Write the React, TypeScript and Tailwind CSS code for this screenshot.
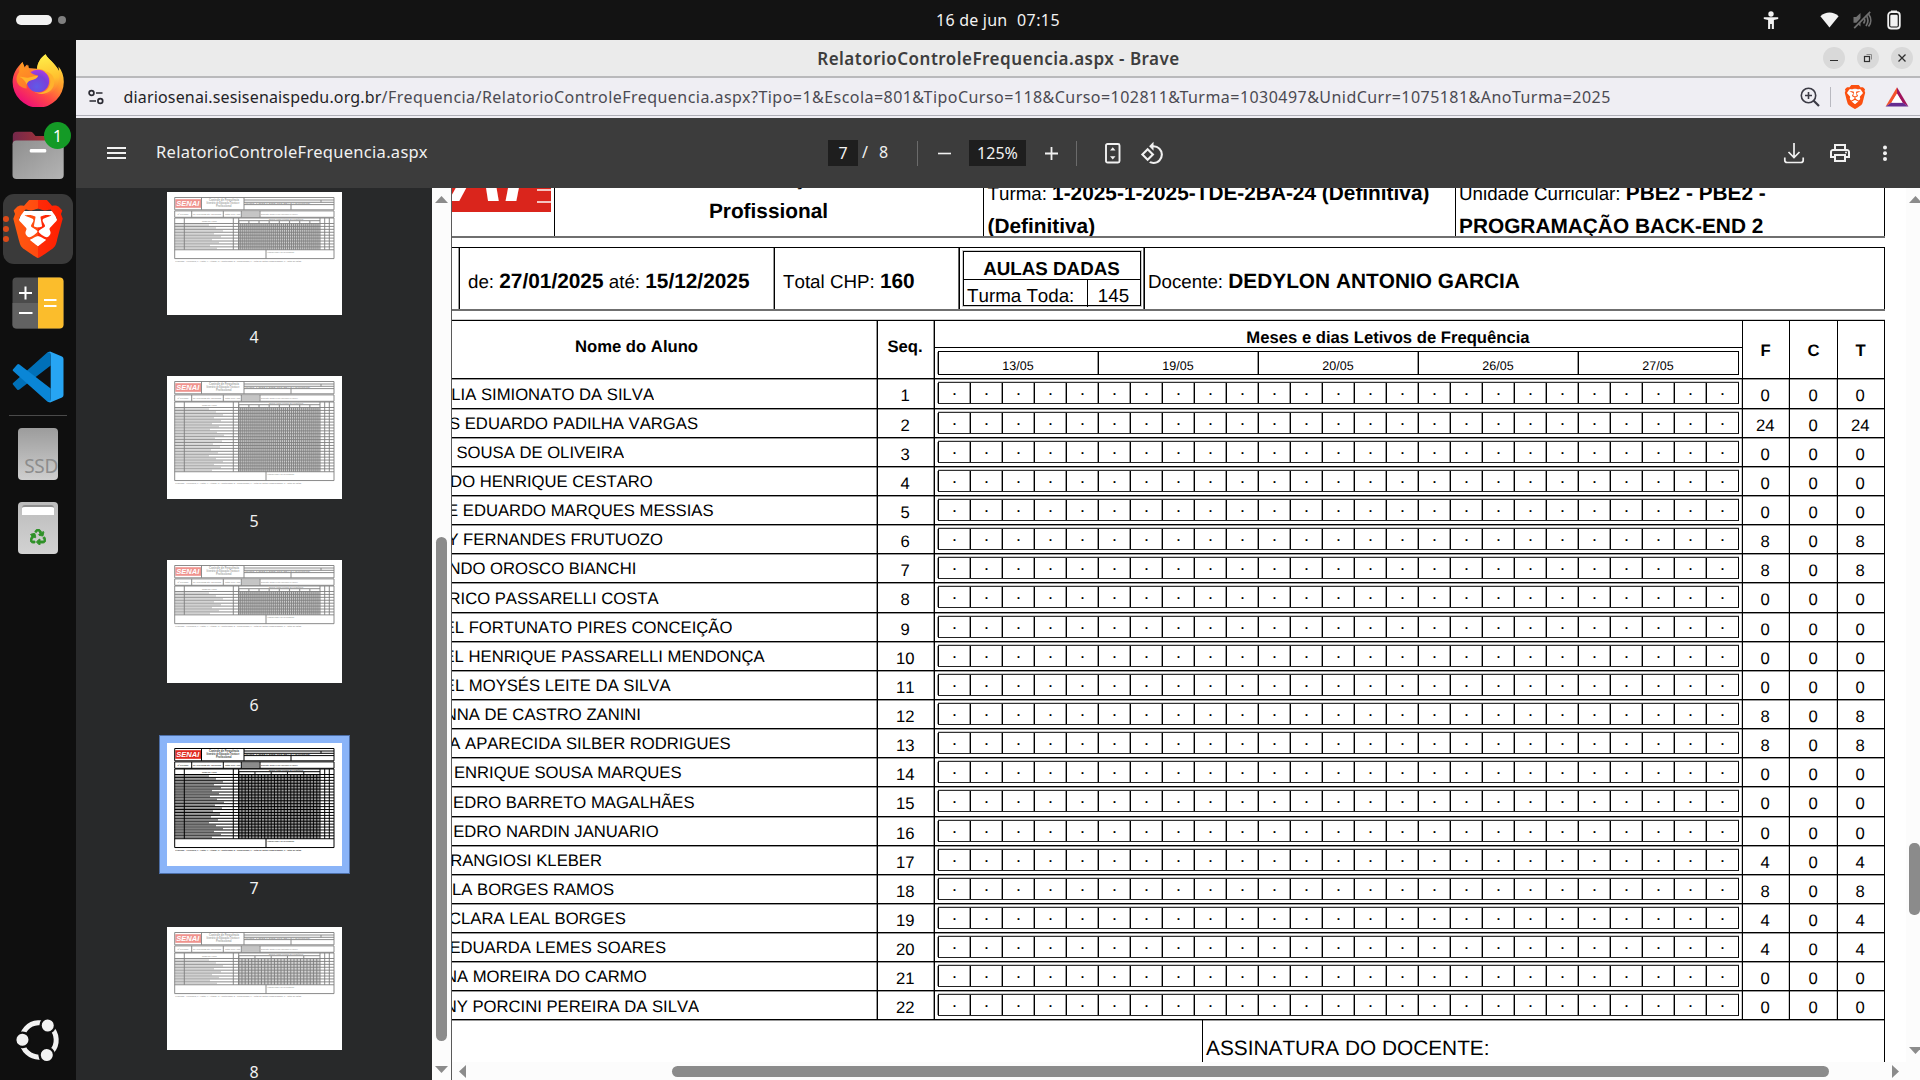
import React from 'react';
import { SiBrave } from 'react-icons/si';
import { FaRecycle } from 'react-icons/fa';
import { MdOutlineRotate90DegreesCcw, MdOutlinePrint } from 'react-icons/md';

type Student = { name: string; width: number; total: number };

const students: Student[] = [
  { name: 'LIA SIMIONATO DA SILVA', width: 202, total: 0 },
  { name: 'S EDUARDO PADILHA VARGAS', width: 246, total: 24 },
  { name: 'SOUSA DE OLIVEIRA', width: 172, total: 0 },
  { name: 'DO HENRIQUE CESTARO', width: 200.8, total: 0 },
  { name: 'E EDUARDO MARQUES MESSIAS', width: 261.6, total: 0 },
  { name: 'Y FERNANDES FRUTUOZO', width: 211, total: 8 },
  { name: 'NDO OROSCO BIANCHI', width: 184.3, total: 8 },
  { name: 'RICO PASSARELLI COSTA', width: 206.6, total: 0 },
  { name: 'EL FORTUNATO PIRES CONCEIÇÃO', width: 280.4, total: 0 },
  { name: 'EL HENRIQUE PASSARELLI MENDONÇA', width: 312.7, total: 0 },
  { name: 'EL MOYSÉS LEITE DA SILVA', width: 218.6, total: 0 },
  { name: 'NNA DE CASTRO ZANINI', width: 189, total: 8 },
  { name: 'A APARECIDA SILBER RODRIGUES', width: 278.7, total: 8 },
  { name: 'ENRIQUE SOUSA MARQUES', width: 229.6, total: 0 },
  { name: 'EDRO BARRETO MAGALHÃES', width: 242.6, total: 0 },
  { name: 'EDRO NARDIN JANUARIO', width: 206.6, total: 0 },
  { name: 'RANGIOSI KLEBER', width: 150, total: 4 },
  { name: 'LA BORGES RAMOS', width: 162, total: 8 },
  { name: 'CLARA LEAL BORGES', width: 173.8, total: 4 },
  { name: 'EDUARDA LEMES SOARES', width: 214, total: 4 },
  { name: 'NA MOREIRA DO CARMO', width: 194.7, total: 0 },
  { name: 'NY PORCINI PEREIRA DA SILVA', width: 247.2, total: 0 },
];

const dates = ['13/05', '19/05', '20/05', '26/05', '27/05'];
const slots = Array.from({ length: 25 }, (_, i) => i);

/* ---------- Desktop ---------- */

function TopBar() {
  return (
    <header className="flex h-10 w-full shrink-0 items-center bg-[#131313] text-[#f2f2f2]">
      <div className="flex w-[936px] items-center pl-4">
        <span className="h-[10px] w-9 rounded-full bg-[#f2f2f2]" />
        <span className="ml-[6px] h-2 w-2 rounded-full bg-[#808080]" />
      </div>
      <div className="flex text-[16px] tracking-[0.23px] whitespace-pre">
        <span className="w-[81px]">16 de jun</span>
        <span className="tracking-[0.42px]">07:15</span>
      </div>
      <div className="ml-auto flex items-center pr-[19px]">
        <svg width="16" height="20" viewBox="0 0 16 20" fill="#f2f2f2">
          <circle cx="8" cy="4" r="2.7" />
          <path d="M.8 7.2h14.4v1.9l-4.3.8V19H8.8v-5H7.2v5H5.1V9.9L.8 9.1z" />
        </svg>
        <svg className="ml-[41px]" width="19" height="16" viewBox="0 0 19 16" fill="#f2f2f2">
          <path d="M9.5 15.6.4 4.2C5.500-.6 13.500-.6 18.600 4.200z" />
        </svg>
        <svg className="ml-[13px]" width="20" height="18" viewBox="0 0 20 18" fill="none" stroke="#707070" strokeWidth="1.700">
          <path d="M1.500 6h2.700l4.300-4v13.500l-4.300-3.800H1.500z" fill="#707070" stroke="none" />
          <path d="M11.500 6c1.500 2 1.500 4.500 0 6.500M14 4c2.500 3.500 2.500 7.500 0 11M16.500 3c3 4 3 9 0 12.500" />
          <path d="M17 .5 1.500 17" stroke="#131313" strokeWidth="3" />
          <path d="M18.200.8 2.200 17.200" />
        </svg>
        <svg className="ml-[15px]" width="14" height="20" viewBox="0 0 14 20">
          <rect x="1.200" y="2.200" width="11.600" height="16.300" rx="3" fill="none" stroke="#f2f2f2" strokeWidth="1.800" />
          <rect x="4" y="0.500" width="6" height="2" fill="#f2f2f2" />
          <rect x="3.300" y="4.800" width="7.400" height="11.800" rx="1.200" fill="#f2f2f2" />
        </svg>
      </div>
    </header>
  );
}

function FirefoxIcon() {
  return (
    <svg width="52" height="54" viewBox="0 0 52 54">
      <defs>
        <linearGradient id="ffBody" x1="0.85" y1="0.1" x2="0.25" y2="0.95">
          <stop offset="0" stopColor="#ffe63c" />
          <stop offset="0.35" stopColor="#ff9a2c" />
          <stop offset="0.65" stopColor="#ff4a45" />
          <stop offset="1" stopColor="#ee0e78" />
        </linearGradient>
        <linearGradient id="ffTail" x1="0.4" y1="0" x2="0.5" y2="1">
          <stop offset="0" stopColor="#fff04a" />
          <stop offset="0.6" stopColor="#ffc02e" />
          <stop offset="1" stopColor="#ff7a35" stopOpacity="0.2" />
        </linearGradient>
        <radialGradient id="ffGlobe" cx="0.45" cy="0.75" r="0.8">
          <stop offset="0" stopColor="#5f5be8" />
          <stop offset="0.6" stopColor="#7a3fd8" />
          <stop offset="1" stopColor="#b23be6" />
        </radialGradient>
        <linearGradient id="ffHead" x1="0" y1="0" x2="0.4" y2="1">
          <stop offset="0" stopColor="#ff9f20" />
          <stop offset="1" stopColor="#ff7a2a" />
        </linearGradient>
      </defs>
      <path d="M33.500 1.200c-5 3.500-8 8.800-8.500 14.500L16 15l-.8-3.500c-1.500 1-2.500 2.200-3 3.500L10.500 9C4.500 14.500.6 21.500.6 29a25.600 25.600 0 0 0 51.200 0c0-6-1.800-11.500-5.300-15.500l.5 4.500c-1.800-4-4.800-6.500-7.500-9.500-2-2.200-4.500-4.500-6-7.300z" fill="url(#ffBody)" />
      <path d="M33.500 1.200c-5 3.500-8 8.800-8.500 14.500 8 0 14 6 14 14 0 6-3 10.500-8 13 9-1 16.500-9 16.500-20 0-5-2.500-8.500-6-12.500-2.500-3-6.500-5.500-8-9z" fill="url(#ffTail)" />
      <circle cx="26" cy="28" r="11.200" fill="url(#ffGlobe)" />
      <path d="M10.500 9C8 12 7 15.500 7.200 19c-1.500 2-2.700 4.500-2.700 7 0 5 4 9 10.300 9.500-.5-5 .2-7.500 3.700-8.500 4-.8 7-1.500 7.700-4.500-3-.5-6.700-1.500-8.700-4l-.5-3-.8-3.500c-1.500 1-2.500 2.200-3 3.500z" fill="url(#ffHead)" />
      <path d="M7.500 24c3-.8 6 1.500 9.500.5 3-.8 5-1.500 9-1.500-1 2.500-4.500 3.700-7.500 4.500-2 .6-3.300 2-3.700 4-2-4-4-6.500-7.300-7.500z" fill="#ffb52b" />
      <path d="M31 18.500c3 .5 6.500 4 6.500 9 0-3-1-6-2.500-7 4 3 5 11 0 16-3 3-8 4.500-13 2 7 5 18 2 20-7 1.500-7-3-14-11-13z" fill="#ffb22d" />
    </svg>
  );
}

function FilesIcon() {
  return (
    <div className="relative">
      <svg width="52" height="49" viewBox="0 0 52 49">
        <defs>
          <linearGradient id="folderBack" x1="0" y1="0" x2="1" y2="0">
            <stop offset="0" stopColor="#74284b" />
            <stop offset="1" stopColor="#c0392b" />
          </linearGradient>
          <linearGradient id="folderFront" x1="0" y1="0" x2="1" y2="1">
            <stop offset="0" stopColor="#8f8f8f" />
            <stop offset="1" stopColor="#b4b4b4" />
          </linearGradient>
        </defs>
        <path d="M.8 14V5Q.8.800 5 .800h13.500q1.500 0 2.500 1.200L23.500 5H47q4 0 4 4v6z" fill="url(#folderBack)" />
        <rect x="0.500" y="9.500" width="51.200" height="38.500" rx="4" fill="url(#folderFront)" />
        <rect x="17.800" y="18" width="16.400" height="3.500" rx="1.200" fill="#fff" />
      </svg>
      <span className="absolute -top-[9px] left-[32px] flex h-[27px] w-[27px] items-center justify-center rounded-full bg-[#149a26] text-[16px] leading-none text-white">1</span>
    </div>
  );
}

function BraveTile() {
  return (
    <div className="relative flex h-[70px] w-[70px] items-center justify-center rounded-[11px] bg-[#3a3a3a]">
      <div className="absolute left-0 flex flex-col gap-[3.700px]">
        <span className="h-[6px] w-[6px] rounded-full bg-[#dd4a18]" />
        <span className="h-[6px] w-[6px] rounded-full bg-[#dd4a18]" />
        <span className="h-[6px] w-[6px] rounded-full bg-[#dd4a18]" />
      </div>
      <svg className="absolute h-[58px] w-[58px]" viewBox="0 0 24 24">
        <path d="M5.500 4.500h13l1.500 4-2 8-6 5-6-5-2-8z" fill="#fff" />
      </svg>
      <svg width="0" height="0" className="absolute">
        <linearGradient id="braveRed" x1="0" y1="0" x2="1" y2="0">
          <stop offset="0" stopColor="#ff5a10" />
          <stop offset="0.5" stopColor="#ff4a10" />
          <stop offset="0.51" stopColor="#ff2a08" />
          <stop offset="1" stopColor="#ff2000" />
        </linearGradient>
      </svg>
      <SiBrave size={58} className="relative fill-[url(#braveRed)]" />
    </div>
  );
}

function CalculatorIcon() {
  return (
    <svg width="52" height="52" viewBox="0 0 52 52">
      <rect x="0.500" y="0.500" width="51" height="51" rx="4" fill="#4b4b4b" />
      <path d="M.5 26H26v25.500H4.500q-4 0-4-4z" fill="#626262" />
      <path d="M26 .5h21.500q4 0 4 4v43q0 4-4 4H26z" fill="#fbbd2c" />
      <path d="M7 16h13M13.500 9.500v13M7 36h13.500M32 23h12.500M32 29h12.500" stroke="#fff" strokeWidth="2" />
    </svg>
  );
}

function CodeIcon() {
  return (
    <svg width="52" height="52" viewBox="0 0 52 52">
      <path d="M.9 33.500 5.300 38.700Q6.200 39.400 7.400 38.600L38.700 14.500V.8q-2.300-.5-4 1.200L1.100 32q-.8.800-.2 1.500z" fill="#0070b8" />
      <path d="M.9 18.500 5.300 13.400q.9-.8 2.100 0L38.700 37.500v13.700q-2.300.5-4-1.200L1.100 20q-.8-.800-.2-1.500z" fill="#0a86d6" />
      <path d="M38.700 51.300q-2 .2-3.600-1.200 3.600 2 3.600-2V4q0-4-3.600-2 1.600-1.500 3.600-1.200L50 5.600q1.500.8 1.500 2.400v36q0 1.700-1.500 2.500z" fill="#27a5f3" />
    </svg>
  );
}

function UbuntuIcon() {
  return (
    <svg width="44" height="44" viewBox="0 0 44 44">
      <g transform="rotate(-3 22 22)">
        <circle cx="23" cy="22" r="17.200" fill="none" stroke="#f2f2f2" strokeWidth="5" />
        <g fill="#f2f2f2" stroke="#0f0f0f" strokeWidth="2.400">
          <circle cx="6.500" cy="21" r="7.200" />
          <circle cx="32.500" cy="8" r="7.200" />
          <circle cx="30" cy="37.500" r="7.200" />
        </g>
      </g>
    </svg>
  );
}

function Dock() {
  return (
    <nav className="flex w-[76px] shrink-0 flex-col items-center bg-[#0f0f0f]">
      <div className="flex h-[78px] w-full items-end justify-center pb-[11px]"><FirefoxIcon /></div>
      <div className="flex h-[74px] w-full items-center justify-center pt-[1px]"><FilesIcon /></div>
      <div className="flex h-[74px] w-full items-center justify-center"><BraveTile /></div>
      <div className="flex h-[74px] w-full items-center justify-center"><CalculatorIcon /></div>
      <div className="flex h-[74px] w-full items-center justify-center"><CodeIcon /></div>
      <div className="mt-[1px] h-px w-[58px] bg-[#4a4a4a]" />
      <div className="flex h-[76px] w-full items-center justify-center">
        <div className="flex h-[52px] w-[40px] items-end justify-end overflow-hidden rounded-[4px] bg-linear-to-b from-[#9c9c9c] to-[#cfcfcf] pb-[4px]">
          <span className="text-[19px] leading-none tracking-[-0.3px] text-[#8c8c8c]">SSD</span>
        </div>
      </div>
      <div className="flex h-[72px] w-full items-center justify-center">
        <div className="flex h-[52px] w-[40px] flex-col items-center rounded-[4px] bg-linear-to-b from-[#bcbcbc] to-[#d2d2d2] pt-[3px]">
          <div className="h-[10px] w-[32px] rounded-t-[3px] border-t-2 border-[#8f8f8f] bg-white" />
          <FaRecycle size={16} className="mt-[14px] stroke-[#2f9128] stroke-[30px] text-[#2f9128]" />
        </div>
      </div>
      <div className="mt-auto pb-[18px]"><UbuntuIcon /></div>
    </nav>
  );
}

/* ---------- Browser chrome ---------- */

function TitleBar() {
  return (
    <div className="relative flex h-[36px] items-center justify-center bg-[#ebebeb]">
      <h1 className="pt-[1px] pl-[1px] text-[17px] font-semibold tracking-[0.48px] text-[#3d3d3d]">RelatorioControleFrequencia.aspx - Brave</h1>
      <div className="absolute right-[7px] flex gap-3">
        <span className="flex h-[22px] w-[22px] items-center justify-center rounded-full bg-[#d9d9d9]">
          <svg width="10" height="10" viewBox="0 0 10 10" stroke="#2f2f2f"><path d="M1 7.500h8" /></svg>
        </span>
        <span className="flex h-[22px] w-[22px] items-center justify-center rounded-full bg-[#d9d9d9]">
          <svg width="10" height="10" viewBox="0 0 10 10" fill="none">
            <rect x="1.500" y="3.500" width="5" height="5" stroke="#2f2f2f" strokeWidth="1.200" />
            <path d="M3.500 1.500h5v5" stroke="#8a8a8a" />
          </svg>
        </span>
        <span className="flex h-[22px] w-[22px] items-center justify-center rounded-full bg-[#d9d9d9]">
          <svg width="10" height="10" viewBox="0 0 10 10" stroke="#2f2f2f" strokeWidth="1.300"><path d="m1.500 1.500 7 7m0-7-7 7" /></svg>
        </span>
      </div>
    </div>
  );
}

function AddressBar() {
  return (
    <div className="flex h-[42px] flex-col">
      <div className="h-[2px] bg-[#b9b9bb]" />
      <div className="flex h-[37px] items-center bg-[#efeef3] pl-[12px]">
        <svg width="16" height="16" viewBox="0 0 16 16" fill="none" stroke="#2b2b33" strokeWidth="1.700">
          <circle cx="3.500" cy="4" r="2.400" />
          <path d="M8 4h6.500M1.500 12H8" />
          <circle cx="12.300" cy="12" r="2.400" />
        </svg>
        <p className="ml-[19.500px] text-[16px] text-[#4b4a52]">
          <span className="tracking-[0.16px] text-[#1f1f26]">diariosenai.sesisenaispedu.org.br</span>
          <span className="tracking-[0.456px]">/Frequencia/RelatorioControleFrequencia.aspx?Tipo=1&amp;Escola=801&amp;TipoCurso=118&amp;Curso=102811&amp;Turma=1030497&amp;UnidCurr=1075181&amp;AnoTurma=2025</span>
        </p>
        <div className="ml-auto flex items-center pr-[11px]">
          <svg width="20" height="20" viewBox="0 0 20 20" fill="none" stroke="#3c3b45" strokeWidth="1.600">
            <circle cx="8.500" cy="8.500" r="7.200" />
            <path d="M8.500 5v7M5 8.500h7" />
            <path d="m13.500 13.500 5.500 5.500" strokeWidth="2.200" />
          </svg>
          <span className="ml-[10px] h-5 w-px bg-[#b9b9c0]" />
          <span className="relative ml-[12.500px] h-6 w-6">
            <svg className="absolute inset-0" viewBox="0 0 24 24"><path d="M5.500 4.500h13l1.500 4-2 8-6 5-6-5-2-8z" fill="#fff" /></svg>
            <SiBrave size={24} className="relative text-[#fb5010]" />
          </span>
          <svg className="ml-[18px]" width="24" height="20" viewBox="0 0 24 20">
            <path d="M12 .3 12 7 6.500 15.800.6 19.500z" fill="#f4522c" />
            <path d="M12 .3V7l5.500 8.800 5.900 3.700z" fill="#a0145c" />
            <path d="M.6 19.600 6.500 15.500h11l5.900 4.100z" fill="#662d91" />
            <path d="M12 6.500 6.300 15.700h11.400z" fill="#fff" />
          </svg>
        </div>
      </div>
      <div className="h-px bg-[#b0b0b8]" />
      <div className="h-[2px] bg-[#f0eff4]" />
    </div>
  );
}

function PdfToolbar() {
  return (
    <div className="flex h-[70px] shrink-0 items-center bg-[#3c3c3c] text-[16px] leading-none text-[#f1f1f1]">
      <div className="flex w-[752px] items-center pl-[31px]">
        <svg width="19" height="14" viewBox="0 0 19 14" stroke="#f1f1f1" strokeWidth="2"><path d="M0 2h19M0 7h19M0 12h19" /></svg>
        <span className="ml-[30px] pb-[1px] text-[16.500px] tracking-[0.29px]">RelatorioControleFrequencia.aspx</span>
      </div>
      <div className="flex items-center">
        <span className="flex h-[26px] w-[30px] items-center justify-center bg-[#1e1e1e]">7</span>
        <span className="w-[21px] pb-[2px] pl-[4px]">/</span>
        <span className="w-[38px] pb-[2px]">8</span>
        <span className="h-[25px] w-px bg-[#6b6b6b]" />
        <svg className="ml-[20px]" width="13" height="14" viewBox="0 0 13 14" stroke="#f1f1f1" strokeWidth="1.600"><path d="M0 7.500h13" /></svg>
        <span className="ml-[18px] flex h-[26px] w-[57px] items-center justify-center bg-[#1e1e1e]">125%</span>
        <svg className="ml-[19px]" width="13" height="14" viewBox="0 0 13 14" stroke="#f1f1f1" strokeWidth="1.800"><path d="M0 7.500h13M6.500 1v13" /></svg>
        <span className="ml-[18px] h-[25px] w-px bg-[#6b6b6b]" />
        <svg className="ml-[28px]" width="16" height="21" viewBox="0 0 16 21" fill="none" stroke="#f1f1f1">
          <rect x="1" y="1" width="13.500" height="18.500" rx="1.500" strokeWidth="1.900" />
          <path d="M5 7.500h5.500L7.750 4.300zM5 13.200h5.500l-2.750 3.200z" fill="#f1f1f1" stroke="none" />
        </svg>
        <MdOutlineRotate90DegreesCcw size={25} className="ml-[19px]" />
      </div>
      <div className="ml-auto flex items-center pr-[32px]">
        <svg width="22" height="22" viewBox="0 0 22 22" fill="none" stroke="#f1f1f1" strokeWidth="1.700">
          <path d="M11 1v14M5.500 10l5.500 5.500 5.500-5.500M1.800 15.500v2.700q0 2.300 2.300 2.300h13.800q2.300 0 2.300-2.300v-2.700" />
        </svg>
        <MdOutlinePrint size={24} className="ml-[23px]" />
        <svg className="ml-[30px]" width="6" height="18" viewBox="0 0 6 18" fill="#f1f1f1">
          <circle cx="3" cy="3.500" r="2" /><circle cx="3" cy="9.300" r="2" /><circle cx="3" cy="15" r="2" />
        </svg>
      </div>
    </div>
  );
}

/* ---------- Page thumbnails ---------- */

function PageMiniature({ rows, days, active }: { rows: number; days: number; active: boolean }) {
  const pitch = 2.92;
  const gridTop = 31.5;
  const gridEnd = gridTop + rows * pitch;
  const bottom = gridEnd + 8.8;
  const cols = days * 5;
  const step = 81.3 / cols;
  return (
    <svg className="block bg-white" width="175" height="123" viewBox="0 0 175 123" fontFamily="Liberation Sans">
      <g opacity={active ? 1 : 0.5}>
        <rect x="8.300" y="7.200" width="25.700" height="8.600" fill="#e02a20" />
        <text x="9.300" y="14.300" fontSize="7.800" fontWeight="700" fontStyle="italic" fill="#fff" textLength="23" lengthAdjust="spacingAndGlyphs">SENAI</text>
        <g fill="none" stroke="#000" strokeWidth={active ? 1 : 0.9}>
          <path d="M7.700 5.500H167v12.300H7.700zM34.500 5.500v12.300M77 5.500v12.300M77 8h90M77 10.300h90M77 12.600h90M124 12.600v5.200M154 8v2.300" />
          <path d="M7.700 18.900H167v6.400H7.700zM24.700 18.900v6.400M56.300 18.900v6.400M74.300 18.900v6.400M93 18.900v6.400" />
          <path d={`M7.700 26H167V${bottom}H7.700zM17.300 26V${gridEnd}M66.300 26V${gridEnd}M71.700 26V${gridEnd}M153 26V${gridEnd}M157.700 26V${gridEnd}M162.300 26V${gridEnd}M71.700 28.700H153M99 ${gridEnd}V${bottom}`} />
          {Array.from({ length: rows + 1 }, (_, i) => (
            <path key={i} d={`M7.700 ${gridTop + i * pitch}H167`} />
          ))}
        </g>
        <rect x="74.600" y="19.500" width="18" height="5.200" fill="#000" opacity="0.450" />
        <rect x="71.700" y={gridTop} width="81.300" height={gridEnd - gridTop} fill="#000" opacity={active ? 0.4 : 0.35} />
        <g stroke="#000" strokeWidth="1.100">
          {Array.from({ length: cols }, (_, i) => (
            <path key={i} d={`M${71.7 + i * step} ${i % 5 === 0 ? 29 : gridTop}V${gridEnd}`} opacity="0.850" />
          ))}
        </g>
        <g fill="#000" opacity={active ? 0.5 : 0.35}>
          {Array.from({ length: rows }, (_, i) => (
            <rect key={i} x="8" y={gridTop + 0.8 + i * pitch} width={34 + ((i * 7) % 16)} height="1.500" />
          ))}
        </g>
        <g fill="#000" fontSize="2.700" fontWeight="700" opacity="0.8">
          <text x="42" y="9.300">Controle de Frequência</text>
          <text x="39.500" y="12.300" textLength="33" lengthAdjust="spacingAndGlyphs">Itinerário de Educação Técnica e</text>
          <text x="49" y="15.300">Profissional</text>
          <text x="10.500" y="23" fontSize="2.200">2º Período</text>
          <text x="26" y="23" fontSize="2.200" textLength="28" lengthAdjust="spacingAndGlyphs">de: 27/01/2025 até: 15/12/2025</text>
          <text x="58" y="23" fontSize="2.200">Total CHP: 160</text>
          <text x="94" y="23" fontSize="2.200" textLength="37" lengthAdjust="spacingAndGlyphs">Docente: DEDYLON ANTONIO GARCIA</text>
          <text x="35" y="29.600" fontSize="2">Nome do Aluno</text>
          <text x="78" y="12.200" fontSize="2" textLength="65" lengthAdjust="spacingAndGlyphs">Turma: 1-2025-1-2025-TDE-2BA-24 (Definitiva)</text>
          <text x="102" y="28.200" fontSize="2">Meses e dias Letivos de Frequência</text>
          <text x="100" y={gridEnd + 3} fontSize="2">ASSINATURA DO DOCENTE:</text>
          <text x="8.300" y={bottom + 3.2} fontSize="2" textLength="126" lengthAdjust="spacingAndGlyphs">Legenda: . Presença; F - Falta; A - Atraso; C - Justificada; D - Dispensado; F - Total de faltas compensadas; T - Total de faltas</text>
        </g>
      </g>
    </svg>
  );
}

function ThumbnailPane() {
  const pages = [
    { n: 4, rows: 9, days: 8 },
    { n: 5, rows: 22, days: 8 },
    { n: 6, rows: 8, days: 8 },
    { n: 7, rows: 22, days: 5 },
    { n: 8, rows: 9, days: 5 },
  ];
  return (
    <aside className="flex w-[376px] shrink-0 bg-[#28292a]">
      <div className="flex w-[356px] flex-col items-center overflow-hidden pt-[4px] pl-[1px]">
        {pages.map((p) => (
          <div key={p.n} className="flex h-[183.800px] w-[175px] shrink-0 flex-col items-center">
            <div className={p.n === 7 ? 'bg-[#8ab4f8] shadow-[0_0_0_7px_#8ab4f8,0_0_0_8px_#4d6fa8]' : ''}>
              <PageMiniature rows={p.rows} days={p.days} active={p.n === 7} />
            </div>
            <span className="mt-[12px] w-full pr-[1px] text-center text-[16px] leading-5 text-[#f1f1f1]">{p.n}</span>
          </div>
        ))}
      </div>
      <div className="flex w-[20px] flex-col items-center border-r border-[#5a5a5a] bg-[#fcfcfc] pt-[8px] pb-[7px]">
        <svg width="13" height="7" viewBox="0 0 13 7" fill="#8b8b8b"><path d="M0 7h13L6.500 0z" /></svg>
        <div className="mt-[334px] h-[504px] w-[11px] rounded-full bg-[#8b8b8b]" />
        <svg className="mt-auto" width="13" height="7" viewBox="0 0 13 7" fill="#8b8b8b"><path d="M0 0h13L6.500 7z" /></svg>
      </div>
    </aside>
  );
}

/* ---------- Report page ---------- */

function ReportHeader() {
  return (
    <section className="flex h-[50px] w-[1433px] shrink-0 overflow-hidden border-b-2 border-[#6f6f6f] text-[20.830px] leading-[33px]">
      <div className="w-[102px]">
        <div className="flex h-[24px] w-[99px] justify-end overflow-hidden bg-[#da251c]">
          <span className="-mt-[56px] text-[75px] leading-[86px] font-bold text-white italic">SENAI</span>
          <span className="ml-[12px] flex w-[14px] shrink-0 flex-col gap-[10px] pt-[1px]">
            <span className="h-[2px] shrink-0 bg-[#f5c4c0]" />
            <span className="h-[2px] shrink-0 bg-[#f5c4c0]" />
          </span>
        </div>
      </div>
      <div className="w-[429px] border-l border-black text-center font-bold">
        <p className="-mt-[26px] pr-[1px]">Itinerário de Educação Técnica e<br />Profissional</p>
      </div>
      <div className="w-[472px] border-l border-black pl-[3.500px]">
        <div className="-mt-[11px] whitespace-nowrap"><span className="text-[18.750px]">Turma: </span><b>1-2025-1-2025-TDE-2BA-24 (Definitiva)<br />(Definitiva)</b></div>
      </div>
      <div className="w-[430px] border-x border-black pl-[3px]">
        <div className="-mt-[11px] whitespace-nowrap"><span className="text-[18.750px]">Unidade Curricular: </span><b>PBE2 - PBE2 -<br />PROGRAMAÇÃO BACK-END 2</b></div>
      </div>
    </section>
  );
}

function PeriodRow() {
  return (
    <section className="mt-[9px] flex h-[64px] w-[1433px] shrink-0 border-t border-b-2 border-t-black border-b-[#6f6f6f] text-[18.750px] leading-[24px]">
      <div className="w-[7px]" />
      <div className="flex w-[315px] items-center border-l border-black pt-[7px] pl-[8px] whitespace-pre shadow-[-1px_0_0_#00000066]">
        <p>de: <b className="text-[20.830px]">27/01/2025</b> até: <b className="text-[20.830px]">15/12/2025</b></p>
      </div>
      <div className="flex w-[185px] items-center border-l border-black pt-[7px] pl-[8px] whitespace-pre shadow-[-1px_0_0_#00000066]">
        <p>Total CHP: <b className="text-[20.830px]">160</b></p>
      </div>
      <div className="w-[185px] border-l border-black pt-[3px] pl-[3px] shadow-[-1px_0_0_#00000099]">
        <div className="flex h-[55px] w-[178px] flex-col border border-black shadow-[0_0_0_1px_#00000033]">
          <div className="h-[27px] pt-[6px] pr-[1px] text-center leading-[22px] font-bold">AULAS DADAS</div>
          <div className="flex flex-1 border-t border-black leading-[22px]">
            <span className="w-[123px] pt-[5px] pl-[3px]">Turma Toda:</span>
            <span className="flex-1 border-l border-black pt-[5px] pr-[1px] text-center">145</span>
          </div>
        </div>
      </div>
      <div className="flex flex-1 items-center border-x border-black pt-[7px] pl-[3px] whitespace-pre shadow-[-1px_0_0_#00000099]">
        <p>Docente: <b className="text-[20.830px]">DEDYLON ANTONIO GARCIA</b></p>
      </div>
    </section>
  );
}

function AttendanceTable() {
  return (
    <section className="mt-[9px] w-[1433px] shrink-0 text-[16.670px] leading-[20px]">
      <div className="flex h-[58.400px] border-t border-black font-bold shadow-[0_-1px_0_#00000033]">
        <div className="w-[425px] pt-[16px] text-center"><span className="pr-[56px]">Nome do Aluno</span></div>
        <div className="w-[57px] border-l border-black pt-[16px] pr-[2px] text-center shadow-[-1px_0_0_#00000066]">Seq.</div>
        <div className="w-[808px] border-l border-black shadow-[-1px_0_0_#00000066]">
          <div className="h-[26px] pt-[7px] pl-[99px] text-center">Meses e dias Letivos de Frequência</div>
          <div className="border-t border-black px-[3px] pt-[3px]">
            <div className="flex h-[24px] w-[801px] border-y border-r border-black text-[12.500px] font-normal">
              {dates.map((d) => (
                <span key={d} className="w-[160px] border-l border-black pt-[4px] pr-[1px] text-center shadow-[-1px_0_0_#00000066]">{d}</span>
              ))}
            </div>
          </div>
        </div>
        <div className="w-[47px] border-l border-black pt-[20px] pr-[1px] text-center">F</div>
        <div className="w-[48px] border-l border-black pt-[20px] text-center">C</div>
        <div className="w-[48px] border-x border-black pt-[20px] pr-[1px] text-center">T</div>
      </div>
      {students.map((s, i) => (
        <div key={s.name} className="flex h-[29.150px] border-t border-black shadow-[inset_0_1px_0_#00000066]">
          <div className="w-[425px] pt-[5.200px]">
            <div className="flex justify-end overflow-hidden whitespace-nowrap" style={{ width: s.width }}>{s.name}</div>
          </div>
          <div className="w-[57px] border-l border-black pt-[7px] pr-[1.500px] text-center shadow-[-1px_0_0_#00000066]">{i + 1}</div>
          <div className="w-[808px] border-l border-black px-[3px] pt-[3px] shadow-[-1px_0_0_#00000066]">
            <div className="flex h-[22px] w-[801px] border-y border-r border-t-[#333] border-r-black border-b-[#222] text-[12.500px] leading-[22px] shadow-[0_-1px_0_#00000033]">
              {slots.map((n) => (
                <span key={n} className="flex w-[32px] justify-center border-l border-black shadow-[-1px_0_0_#00000066]">
                  <span className="-mt-[3px] font-bold">.</span>
                </span>
              ))}
            </div>
          </div>
          <div className="w-[47px] border-l border-black pt-[7px] pr-[1.500px] text-center shadow-[-1px_0_0_#00000033]">{s.total}</div>
          <div className="w-[48px] border-l border-black pt-[7px] pr-[0.500px] text-center shadow-[-1px_0_0_#00000033]">0</div>
          <div className="w-[48px] border-x border-black pt-[7px] pr-[1.500px] text-center shadow-[-1px_0_0_#00000033]">{s.total}</div>
        </div>
      ))}
      <div className="flex h-[44px] border-t border-black text-[20.830px] shadow-[inset_0_1px_0_#00000066]">
        <div className="w-[750px]" />
        <div className="flex-1 border-x border-black pt-[19px] pl-[3px]">ASSINATURA DO DOCENTE:</div>
      </div>
    </section>
  );
}

function PageView() {
  return (
    <main className="flex min-w-0 flex-1 flex-col bg-white">
      <div className="flex min-h-0 flex-1">
        <div className="flex h-[874px] w-[1454px] flex-col overflow-hidden font-['Liberation_Sans',Arial,sans-serif] text-black [font-kerning:none] [font-variant-ligatures:none] [text-rendering:geometricPrecision]">
          <ReportHeader />
          <PeriodRow />
          <AttendanceTable />
        </div>
        <div className="flex w-[14px] flex-col overflow-hidden bg-[#fcfcfc] pt-[8px] pb-[8px] pl-[3px]">
          <svg className="shrink-0" width="13" height="7" viewBox="0 0 13 7" fill="#8b8b8b"><path d="M0 7h13L6.500 0z" /></svg>
          <div className="mt-[640px] h-[72px] w-[11px] shrink-0 rounded-[5px] bg-[#8b8b8b]" />
          <svg className="mt-auto shrink-0" width="13" height="7" viewBox="0 0 13 7" fill="#8b8b8b"><path d="M0 0h13L6.500 7z" /></svg>
        </div>
      </div>
      <div className="flex h-[18px] items-center bg-[#fcfcfc] pl-[7px]">
        <svg width="7" height="13" viewBox="0 0 7 13" fill="#8b8b8b"><path d="M7 0v13L0 6.500z" /></svg>
        <div className="ml-[206px] h-[11px] w-[1157px] rounded-full bg-[#8b8b8b]" />
        <svg className="ml-[63px]" width="7" height="13" viewBox="0 0 7 13" fill="#8b8b8b"><path d="M0 0v13l7-6.500z" /></svg>
      </div>
    </main>
  );
}

export default function App() {
  return (
    <div className="flex h-[1080px] w-[1920px] flex-col overflow-hidden bg-black font-['Noto_Sans',sans-serif]">
      <TopBar />
      <div className="flex min-h-0 flex-1">
        <Dock />
        <div className="flex min-w-0 flex-1 flex-col">
          <TitleBar />
          <AddressBar />
          <PdfToolbar />
          <div className="flex min-h-0 flex-1">
            <ThumbnailPane />
            <PageView />
          </div>
        </div>
      </div>
    </div>
  );
}
